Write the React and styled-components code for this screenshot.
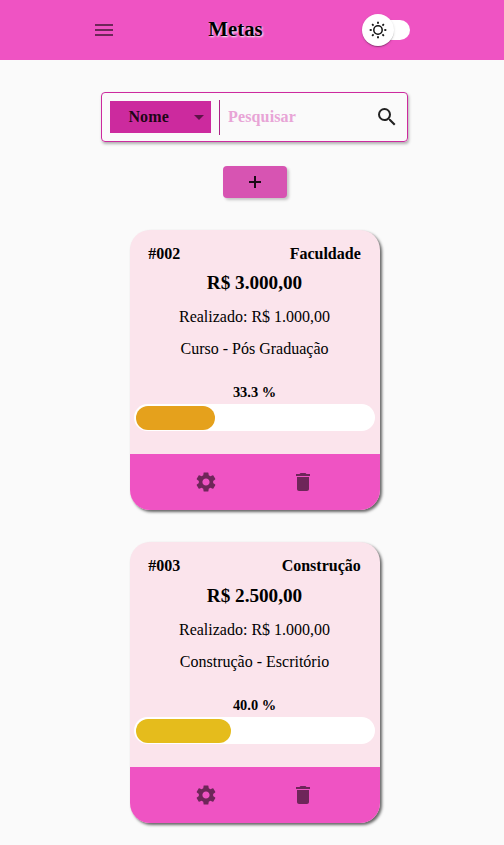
import React from 'react';
import styled, { createGlobalStyle } from 'styled-components';
import { MdMenu, MdSettings, MdSearch, MdArrowDropDown } from 'react-icons/md';

const GlobalStyle = createGlobalStyle`
  * { box-sizing: border-box; }
  body {
    margin: 0;
    background: #fafafa;
    color: #000;
    font-family: "Liberation Serif", "Times New Roman", serif;
    font-size: 16px;
    overflow: hidden;
  }
`;

const Page = styled.div`
  height: 845px;
  overflow: hidden;
`;

const Header = styled.header`
  display: grid;
  grid-template-columns: 24px 1fr 48px;
  align-items: center;
  height: 60px;
  padding: 0 94px 0 92px;
  background: #ef53c3;
`;

const Title = styled.h1`
  margin: 0 7px 2px 0;
  justify-self: center;
  font-size: 20.8px;
  line-height: 24px;
  text-shadow: 1px 1px 2px #fff;
`;

const IconButton = styled.button`
  display: flex;
  padding: 0;
  border: 0;
  background: none;
  color: ${({ $color }) => $color || 'rgba(0, 0, 0, 0.54)'};
`;

const SwitchTrack = styled.div`
  display: flex;
  align-items: center;
  width: 40px;
  height: 20px;
  margin-left: 8px;
  border-radius: 10px;
  background: #fff;
`;

const SwitchThumb = styled.div`
  display: flex;
  flex: none;
  align-items: center;
  justify-content: center;
  width: 32px;
  height: 32px;
  margin-left: -8px;
  border-radius: 50%;
  background: #fff;
  box-shadow: 0 2px 1px -1px rgba(0, 0, 0, 0.2), 0 1px 1px rgba(0, 0, 0, 0.14),
    0 1px 3px rgba(0, 0, 0, 0.12);
`;

const Main = styled.main`
  display: flex;
  flex-direction: column;
  align-items: center;
  padding: 32px 0 0 5px;
`;

const SearchBox = styled.div`
  display: flex;
  align-items: center;
  width: 307px;
  height: 50px;
  padding: 0 8px;
  border: 1px solid #cc2a9e;
  border-radius: 4px;
  box-shadow: 1px 2px 3px rgba(0, 0, 0, 0.3);
`;

const Select = styled.div`
  display: flex;
  align-items: center;
  justify-content: space-between;
  width: 101px;
  height: 32px;
  padding-left: 18.4px;
  background: #cc2a9e;
  color: rgba(0, 0, 0, 0.87);
  font-weight: bold;
  letter-spacing: 0.15px;

  svg { color: rgba(0, 0, 0, 0.54); }
`;

const Divider = styled.div`
  width: 1px;
  height: 35px;
  margin: 0 8px;
  background: #ab2385;
`;

const SearchInput = styled.input`
  flex: 1;
  min-width: 0;
  height: 32px;
  padding: 0;
  border: 0;
  outline: 0;
  background: none;
  font: bold 16px "Liberation Serif", serif;
  letter-spacing: 0.15px;

  &::placeholder { color: #e8a4d6; opacity: 1; }
`;

const AddButton = styled.button`
  display: flex;
  align-items: center;
  justify-content: center;
  width: 64px;
  height: 32px;
  margin: 24px 0 32px;
  padding: 0;
  border: 0;
  border-radius: 4px;
  background: #d754b2;
  color: rgba(0, 0, 0, 0.87);
  box-shadow: 2px 2px 3px rgba(0, 0, 0, 0.22);
`;

const CardList = styled.div`
  display: flex;
  flex-direction: column;
  gap: 32.35px;
`;

const Card = styled.article`
  width: 250px;
  height: 280.1px;
  display: flex;
  flex-direction: column;
  border-radius: 20px;
  overflow: hidden;
  background: #fbe4ec;
  box-shadow: 2px 2px 3px rgba(0, 0, 0, 0.6);
`;

const CardHeader = styled.div`
  display: flex;
  justify-content: space-between;
  padding: 13.7px 18.75px 0;
  line-height: 19px;
  font-weight: bold;
`;

const Amount = styled.strong`
  margin-top: 9.5px;
  font-size: 19.2px;
  line-height: 22px;
  text-align: center;
`;

const Detail = styled.div`
  margin-top: 14px;
  line-height: 18px;
  text-align: center;
`;

const Percent = styled.div`
  margin-top: 26px;
  font-size: 14.4px;
  line-height: 17px;
  font-weight: bold;
  text-align: center;
`;

const ProgressTrack = styled.div`
  height: 27px;
  margin: 3px 5px 0 4px;
  padding: 2px 0 1px 2px;
  border-radius: 14px;
  background: #fff;
`;

const ProgressFill = styled.div`
  height: 24px;
  border-radius: 12px;
  background: ${({ $color }) => $color};
`;

const CardFooter = styled.footer`
  display: flex;
  flex: none;
  align-items: center;
  justify-content: center;
  gap: 73px;
  height: 56px;
  margin-top: auto;
  padding-right: 1px;
  background: #ef53c3;
`;

const goals = [
  { id: '#002', category: 'Faculdade', amount: 'R$ 3.000,00', done: 'R$ 1.000,00', text: 'Curso - Pós Graduação', percent: 33.3, color: '#e5a11c' },
  { id: '#003', category: 'Construção', amount: 'R$ 2.500,00', done: 'R$ 1.000,00', text: 'Construção - Escritório', percent: 40, color: '#e5bc1c' },
];

const rays = [0, 45, 90, 135, 180, 225, 270, 315];

function SunIcon() {
  return (
    <svg width="20" height="20" viewBox="0 0 20 20" fill="none" stroke="#111">
      <circle cx="10" cy="10" r="4.2" strokeWidth="1.5" />
      {rays.map((angle) => (
        <path key={angle} d="M10 1.7V3.7" strokeWidth="1.8" transform={`rotate(${angle} 10 10)`} />
      ))}
    </svg>
  );
}

function PlusIcon() {
  return (
    <svg width="20" height="20" viewBox="0 0 20 20" fill="none" stroke="currentColor" strokeWidth="2">
      <path d="M4 10H16M10 4V16" />
    </svg>
  );
}

function TrashIcon() {
  return (
    <svg width="24" height="24" viewBox="0 0 24 24" fill="currentColor">
      <path d="M6 19c0 1.1.9 2 2 2h8c1.1 0 2-.9 2-2V7H6v12zM19 4h-3.5l-1-1h-5l-1 1H5v2h14V4z" />
    </svg>
  );
}

function GoalCard({ goal }) {
  return (
    <Card>
      <CardHeader>
        <span>{goal.id}</span>
        <span>{goal.category}</span>
      </CardHeader>
      <Amount>{goal.amount}</Amount>
      <Detail>Realizado: {goal.done}</Detail>
      <Detail>{goal.text}</Detail>
      <Percent>{goal.percent.toFixed(1)} %</Percent>
      <ProgressTrack>
        <ProgressFill $color={goal.color} style={{ width: `${goal.percent}%` }} />
      </ProgressTrack>
      <CardFooter>
        <IconButton aria-label="Editar"><MdSettings size={24} /></IconButton>
        <IconButton aria-label="Excluir"><TrashIcon /></IconButton>
      </CardFooter>
    </Card>
  );
}

export default function App() {
  return (
    <Page>
      <GlobalStyle />
      <Header>
        <IconButton aria-label="Menu"><MdMenu size={24} /></IconButton>
        <Title>Metas</Title>
        <SwitchTrack>
          <SwitchThumb><SunIcon /></SwitchThumb>
        </SwitchTrack>
      </Header>
      <Main>
        <SearchBox>
          <Select>Nome<MdArrowDropDown size={24} /></Select>
          <Divider />
          <SearchInput placeholder="Pesquisar" />
          <IconButton $color="rgba(0, 0, 0, 0.87)" aria-label="Buscar"><MdSearch size={24} /></IconButton>
        </SearchBox>
        <AddButton aria-label="Adicionar"><PlusIcon /></AddButton>
        <CardList>
          {goals.map((goal) => <GoalCard key={goal.id} goal={goal} />)}
        </CardList>
      </Main>
    </Page>
  );
}
